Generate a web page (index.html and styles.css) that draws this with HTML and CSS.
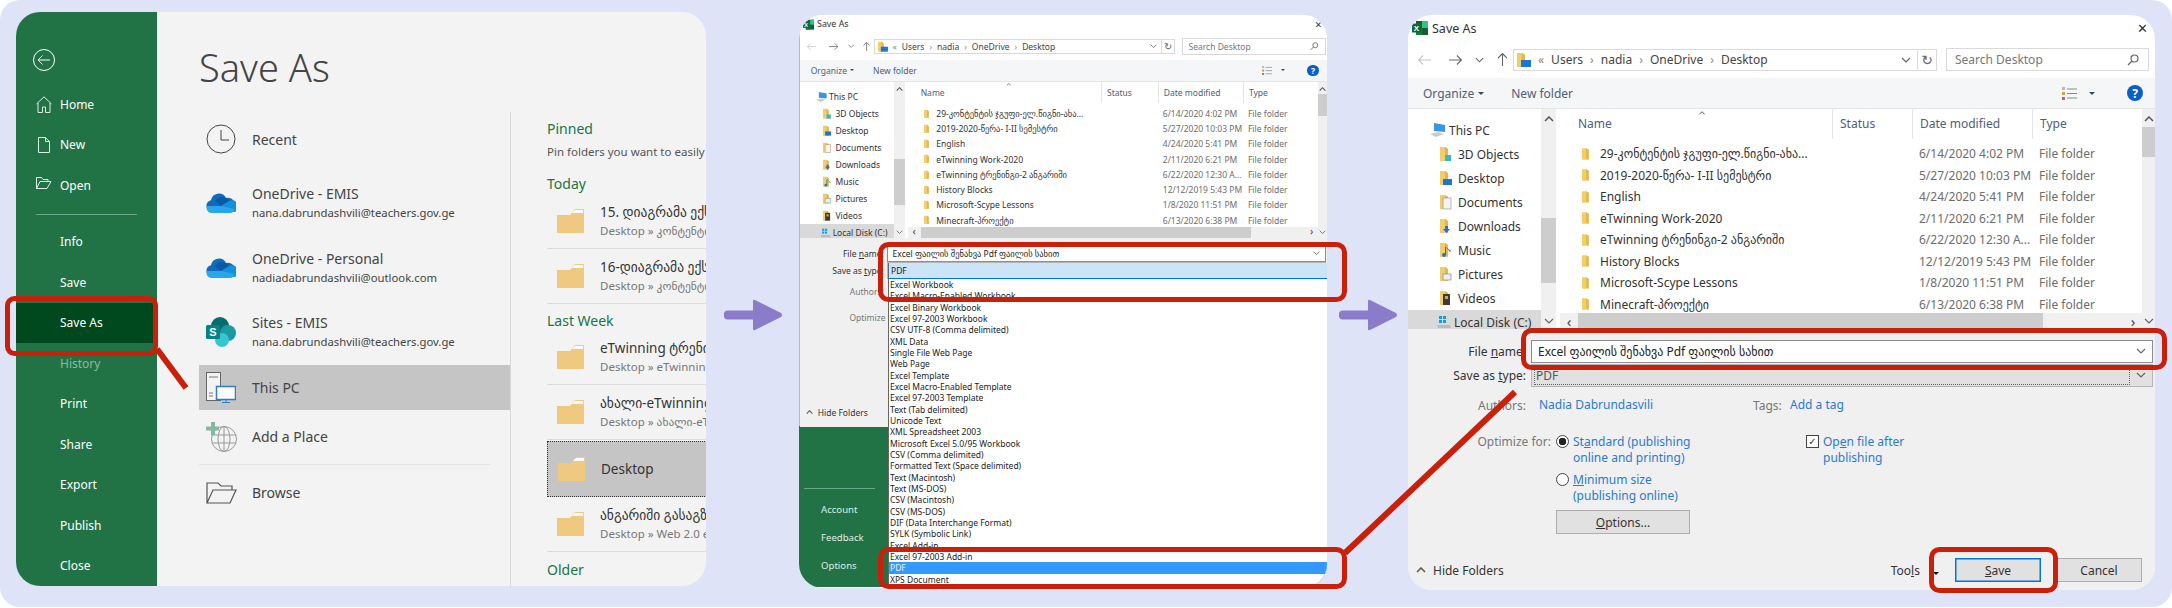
FILE: index.html
```html
<!DOCTYPE html>
<html>

<head>
    <title>Save As - Excel to PDF steps</title>
    <link rel="stylesheet" href="styles.css">
</head>

<body>
    <!-- shared icons -->
    <svg class="defs" width="0" height="0">
        <symbol id="i-folder" viewBox="0 0 27 24">
            <path d="M0 6h13l5-6h9v24H0z" fill="#efc97f"/>
            <path d="M18 1h8v3h-11z" fill="#fff"/>
        </symbol>
        <symbol id="i-small-folder" viewBox="0 0 12 16">
            <path d="M0 1h5l3 2v12H0z" fill="#f3cd6c"/>
            <path d="M5 1l3 2v12l-3-2z" fill="#e3b54a"/>
        </symbol>
        <symbol id="i-cloud" viewBox="0 0 30 20">
            <path d="M6 19a6 6 0 0 1-1-11.800A8 8 0 0 1 20 5a6 6 0 0 1 4 14z" fill="#0f6cbd"/>
            <path d="M9 8a8 8 0 0 1 11-3l4 3-9 5z" fill="#0a58a8"/>
            <path d="M15 13l8-5a6 6 0 0 1 6 11H8z" fill="#1490df"/>
            <path d="M5 20a5 5 0 0 1-4-7l14 0 13 3a4 4 0 0 1-4 4z" fill="#28a8ea"/>
        </symbol>
        <symbol id="i-excel" viewBox="0 0 16 16">
            <rect x="4" y="1" width="12" height="14" fill="#185c37"/>
            <rect x="10" y="1" width="6" height="7" fill="#33c481"/>
            <rect x="4" y="8" width="6" height="7" fill="#107c41"/>
            <rect x="0" y="3.500" width="9" height="9" fill="#0b6a3b"/>
            <text x="4.500" y="11" class="svg-x">X</text>
        </symbol>
        <symbol id="i-chev-down" viewBox="0 0 10 6">
            <path d="M1 1l4 4 4-4" fill="none" stroke="#666" stroke-width="1.200"/>
        </symbol>
        <symbol id="i-chev-up" viewBox="0 0 10 6">
            <path d="M1 5l4-4 4 4" fill="none" stroke="#555" stroke-width="1.500"/>
        </symbol>
        <symbol id="i-arrow" viewBox="0 0 13 10">
            <path d="M0 5h12.500M8 .5L12.500 5 8 9.500" fill="none" stroke="currentColor" stroke-width="1.100"/>
        </symbol>
    </svg>

    <main class="sheet">

        <!-- step 1: backstage -->
        <section class="panel backstage">
            <nav class="side">
                <div class="side-back">
                    <svg width="22" height="22" viewBox="0 0 22 22" fill="none" stroke="#fff" stroke-width="1">
                        <circle cx="11" cy="11" r="10.500"/>
                        <path d="M5 11h12M9.500 6.500L5 11l4.500 4.500"/>
                    </svg>
                </div>
                <a class="side-item">
                    <svg class="side-icon" width="16" height="17" viewBox="0 0 16 17" fill="none" stroke="#dfeee5" stroke-width="1">
                        <path d="M.5 8L8 .8 15.500 8M2 7v9.500h4.500V11h3v5.500H14V7"/>
                    </svg>Home
                </a>
                <a class="side-item">
                    <svg class="side-icon" width="16" height="16" viewBox="0 0 16 16" fill="none" stroke="#dfeee5" stroke-width="1">
                        <path d="M2.500.5h7l4 4v11h-11zM9.500.5v4h4"/>
                    </svg>New
                </a>
                <a class="side-item">
                    <svg class="side-icon" width="16" height="12" viewBox="0 0 16 12" fill="none" stroke="#dfeee5" stroke-width="1">
                        <path d="M.5 11.500V.5h5l1.500 2h5v2M.5 11.500h10.500l4-7H4z"/>
                    </svg>Open
                </a>
                <div class="side-rule"></div>
                <a class="side-item">Info</a>
                <a class="side-item">Save</a>
                <a class="side-item current">Save As</a>
                <a class="side-item muted">History</a>
                <a class="side-item">Print</a>
                <a class="side-item">Share</a>
                <a class="side-item">Export</a>
                <a class="side-item">Publish</a>
                <a class="side-item">Close</a>
            </nav>

            <div class="stage">
                <h1 class="stage-title">Save As</h1>
                <div class="stage-cols">
                    <div class="places">
                        <div class="place place-recent">
                            <span class="place-icon">
                                <svg width="30" height="30" viewBox="0 0 30 30" fill="none" stroke="#444" stroke-width="1">
                                    <circle cx="15" cy="15" r="14"/>
                                    <path d="M15 6v10h8"/>
                                </svg>
                            </span>
                            <div class="place-title">Recent</div>
                        </div>
                        <div class="place place-two">
                            <span class="place-icon">
                                <svg width="30" height="20"><use href="#i-cloud"/></svg>
                            </span>
                            <div>
                                <div class="place-title">OneDrive - EMIS</div>
                                <div class="place-sub">nana.dabrundashvili@teachers.gov.ge</div>
                            </div>
                        </div>
                        <div class="place place-two">
                            <span class="place-icon">
                                <svg width="30" height="20"><use href="#i-cloud"/></svg>
                            </span>
                            <div>
                                <div class="place-title">OneDrive - Personal</div>
                                <div class="place-sub">nadiadabrundashvili@outlook.com</div>
                            </div>
                        </div>
                        <div class="place place-two">
                            <span class="place-icon">
                                <svg width="30" height="30" viewBox="0 0 30 30">
                                    <circle cx="14" cy="9" r="9" fill="#036c70"/>
                                    <circle cx="22" cy="16" r="8" fill="#1a9ba1"/>
                                    <circle cx="16" cy="23" r="7" fill="#37c6d0"/>
                                    <rect x="0" y="8" width="14" height="14" rx="1.500" fill="#038387"/>
                                    <text x="7" y="19" class="svg-s">S</text>
                                </svg>
                            </span>
                            <div>
                                <div class="place-title">Sites - EMIS</div>
                                <div class="place-sub">nana.dabrundashvili@teachers.gov.ge</div>
                            </div>
                        </div>
                        <div class="place place-pc">
                            <span class="place-icon">
                                <svg width="30" height="31" viewBox="0 0 30 31">
                                    <rect x=".5" y=".5" width="14" height="28" fill="#f4f4f4" stroke="#666"/>
                                    <path d="M3 5h9M3 21h4M3 24h4" stroke="#777"/>
                                    <rect x="10.500" y="14.500" width="19" height="13" fill="#fff" stroke="#2b7cd3" stroke-width="1.500"/>
                                    <path d="M20 28v2M16 30.500h8" stroke="#2b7cd3"/>
                                </svg>
                            </span>
                            <div class="place-title">This PC</div>
                        </div>
                        <div class="place place-add">
                            <span class="place-icon">
                                <svg width="31" height="30" viewBox="0 0 31 30" fill="none">
                                    <g stroke="#999">
                                        <circle cx="18" cy="17" r="12.500"/>
                                        <ellipse cx="18" cy="17" rx="6" ry="12.500"/>
                                        <path d="M6 13h24M6 21h24M18 4v26"/>
                                    </g>
                                    <path d="M7 0v13M0 6.500h13" stroke="#86b8a0" stroke-width="4"/>
                                </svg>
                            </span>
                            <div class="place-title">Add a Place</div>
                        </div>
                        <div class="place place-browse">
                            <span class="place-icon">
                                <svg width="31" height="22" viewBox="0 0 31 22" fill="none" stroke="#555" stroke-width="1.200">
                                    <path d="M1 21V1h11l3 3h11v4M1 21h23l6-13H7z"/>
                                </svg>
                            </span>
                            <div class="place-title">Browse</div>
                        </div>
                    </div>

                    <div class="recent">
                        <h2 class="recent-head">Pinned</h2>
                        <p class="recent-note">Pin folders you want to easily find later</p>
                        <h2 class="recent-head today">Today</h2>
                        <div class="folder-row">
                            <svg width="27" height="24"><use href="#i-folder"/></svg>
                            <div>
                                <div class="folder-title">15. დიაგრამა ექსელში</div>
                                <div class="folder-sub">Desktop » კონტენტი</div>
                            </div>
                        </div>
                        <div class="folder-row">
                            <svg width="27" height="24"><use href="#i-folder"/></svg>
                            <div>
                                <div class="folder-title">16-დიაგრამა ექსელში</div>
                                <div class="folder-sub">Desktop » კონტენტი</div>
                            </div>
                        </div>
                        <h2 class="recent-head">Last Week</h2>
                        <div class="folder-row">
                            <svg width="27" height="24"><use href="#i-folder"/></svg>
                            <div>
                                <div class="folder-title">eTwinning ტრენინგი</div>
                                <div class="folder-sub">Desktop » eTwinning</div>
                            </div>
                        </div>
                        <div class="folder-row">
                            <svg width="27" height="24"><use href="#i-folder"/></svg>
                            <div>
                                <div class="folder-title">ახალი-eTwinning</div>
                                <div class="folder-sub">Desktop » ახალი-eTwinning</div>
                            </div>
                        </div>
                        <div class="folder-row picked">
                            <svg width="27" height="24"><use href="#i-folder"/></svg>
                            <div class="folder-title">Desktop</div>
                        </div>
                        <div class="folder-row">
                            <svg width="27" height="24"><use href="#i-folder"/></svg>
                            <div>
                                <div class="folder-title">ანგარიში გასაგზავნი</div>
                                <div class="folder-sub">Desktop » Web 2.0 eTwinning</div>
                            </div>
                        </div>
                        <h2 class="recent-head older">Older</h2>
                    </div>
                </div>
            </div>
        </section>

        <div class="arrow-cell">
            <svg width="58" height="32" viewBox="0 0 58 32"><path d="M4 16h26" stroke="#8a7cc9" stroke-width="9" stroke-linecap="round"/><path d="M29 2q0-2 2-1l26 13q2 2 0 4L31 31q-2 1-2-1z" fill="#8a7cc9"/></svg>
        </div>

        <!-- step 2: dialog with the type list open -->
        <section class="panel panel-mid">
            <div class="dialog dialog-small">
                <div class="dlg-title">
                    <svg width="16" height="16"><use href="#i-excel"/></svg>
                    <span>Save As</span>
                    <span class="dlg-close">✕</span>
                </div>
                <div class="dlg-nav">
                    <svg class="nav-back" width="13" height="10"><use href="#i-arrow" transform="rotate(180 6.500 5)"/></svg>
                    <svg class="nav-fwd" width="13" height="10"><use href="#i-arrow"/></svg>
                    <svg class="nav-chev" width="9" height="6"><use href="#i-chev-down"/></svg>
                    <svg class="nav-up" width="11" height="13"><use href="#i-arrow" width="13" height="10" transform="rotate(-90 6.500 6.500) translate(0 1.500)"/></svg>
                    <div class="addr">
                        <svg width="14" height="16" viewBox="0 0 14 16"><use href="#i-small-folder" width="12" height="16"/><rect x="4" y="8" width="10" height="7" fill="#1b78d0"/></svg>
                        <span class="crumb-sep">«</span><span>Users</span><span class="crumb-sep">›</span><span>nadia</span><span class="crumb-sep">›</span><span>OneDrive</span><span class="crumb-sep">›</span><span>Desktop</span>
                        <svg class="addr-chev" width="10" height="6"><use href="#i-chev-down"/></svg>
                        <span class="addr-refresh">↻</span>
                    </div>
                    <div class="search">
                        <span>Search Desktop</span>
                        <svg width="12" height="12" viewBox="0 0 12 12" fill="none" stroke="#666" stroke-width="1.200"><circle cx="7.500" cy="4.500" r="3.500"/><path d="M5 7l-4 4"/></svg>
                    </div>
                </div>
                <div class="dlg-tools">
                    <span class="tool">Organize <i class="caret"></i></span>
                    <span class="tool">New folder</span>
                    <span class="tool-view">
                        <svg width="15" height="13" viewBox="0 0 15 13"><path d="M5 2h10M5 6.500h10M5 11h10" stroke="#888"/><rect width="3" height="3" fill="#b8b8b8"/><rect y="5" width="3" height="3" fill="#d9a441"/><rect y="10" width="3" height="3" fill="#b86a5a"/></svg>
                        <i class="caret"></i>
                    </span>
                    <span class="help">?</span>
                </div>
                <div class="dlg-body">
                    <div class="tree">
                        <div class="tree-row root"><svg width="16" height="14" viewBox="0 0 16 14"><path d="M4 0l11 2v7L4 8z" fill="#3a96dd"/><path d="M0 11l8-2 6 2-8 3z" fill="#ccc"/></svg>This PC</div>
                        <div class="tree-row"><svg width="12" height="16" viewBox="0 0 12 16"><use href="#i-small-folder"/><rect x="5" y="9" width="6" height="6" fill="#37b5cf"/></svg>3D Objects</div>
                        <div class="tree-row"><svg width="12" height="16" viewBox="0 0 12 16"><use href="#i-small-folder"/><rect x="3" y="9" width="9" height="6" fill="#1b78d0"/></svg>Desktop</div>
                        <div class="tree-row"><svg width="12" height="16" viewBox="0 0 12 16"><use href="#i-small-folder"/><rect x="3" y="4" width="8" height="11" fill="#f4f4f4" stroke="#8a8a8a" stroke-width=".6"/></svg>Documents</div>
                        <div class="tree-row"><svg width="12" height="16" viewBox="0 0 12 16"><use href="#i-small-folder"/><path d="M5 8h3v3h2l-3.500 4L3 11h2z" fill="#2a6fc9"/></svg>Downloads</div>
                        <div class="tree-row"><svg width="12" height="16" viewBox="0 0 12 16"><use href="#i-small-folder"/><path d="M6 5v8a2 2 0 1 1-2-2h1V5h1l5 4-1 1z" fill="#1b78d0"/></svg>Music</div>
                        <div class="tree-row"><svg width="12" height="16" viewBox="0 0 12 16"><use href="#i-small-folder"/><rect x="3" y="8" width="8" height="6" fill="#eee" stroke="#7a94ad" stroke-width=".7"/></svg>Pictures</div>
                        <div class="tree-row"><svg width="12" height="16" viewBox="0 0 12 16"><use href="#i-small-folder"/><rect x="3" y="4" width="7" height="11" fill="#3b3b3b"/><rect x="5" y="6" width="3" height="3" fill="#d9a441"/></svg>Videos</div>
                        <div class="tree-row disk"><svg width="16" height="14" viewBox="0 0 16 14"><path d="M1 10h13l1 3H2z" fill="#bbb"/><rect x="3" y="1" width="3" height="3" fill="#00a4ef"/><rect x="7" y="1" width="3" height="3" fill="#00a4ef"/><rect x="3" y="5" width="3" height="3" fill="#00a4ef"/><rect x="7" y="5" width="3" height="3" fill="#00a4ef"/></svg>Local Disk (C:)</div>
                    </div>
                    <div class="vbar tree-bar">
                        <svg class="vbar-btn" width="10" height="6"><use href="#i-chev-up"/></svg>
                        <div class="vbar-thumb tree-thumb"></div>
                        <svg class="vbar-btn low" width="10" height="6"><use href="#i-chev-down"/></svg>
                    </div>
                    <div class="files">
                        <div class="files-main">
                            <div class="file-head">
                                <span class="col-name">Name<svg class="sort-mark" width="8" height="4" viewBox="0 0 10 6"><use href="#i-chev-up"/></svg></span><span>Status</span><span>Date modified</span><span>Type</span>
                            </div>
                            <div class="file-rows">
                                <div class="file-row"><span class="col-name"><svg width="10" height="14"><use href="#i-small-folder"/></svg><b>29-კონტენტის ჯგუფი-ელ.წიგნი-ახა...</b></span><span></span><span>6/14/2020 4:02 PM</span><span>File folder</span></div>
                                <div class="file-row"><span class="col-name"><svg width="10" height="14"><use href="#i-small-folder"/></svg><b>2019-2020-წერა- I-II სემესტრი</b></span><span></span><span>5/27/2020 10:03 PM</span><span>File folder</span></div>
                                <div class="file-row"><span class="col-name"><svg width="10" height="14"><use href="#i-small-folder"/></svg><b>English</b></span><span></span><span>4/24/2020 5:41 PM</span><span>File folder</span></div>
                                <div class="file-row"><span class="col-name"><svg width="10" height="14"><use href="#i-small-folder"/></svg><b>eTwinning Work-2020</b></span><span></span><span>2/11/2020 6:21 PM</span><span>File folder</span></div>
                                <div class="file-row"><span class="col-name"><svg width="10" height="14"><use href="#i-small-folder"/></svg><b>eTwinning ტრენინგი-2 ანგარიში</b></span><span></span><span>6/22/2020 12:30 A...</span><span>File folder</span></div>
                                <div class="file-row"><span class="col-name"><svg width="10" height="14"><use href="#i-small-folder"/></svg><b>History Blocks</b></span><span></span><span>12/12/2019 5:43 PM</span><span>File folder</span></div>
                                <div class="file-row"><span class="col-name"><svg width="10" height="14"><use href="#i-small-folder"/></svg><b>Microsoft-Scype Lessons</b></span><span></span><span>1/8/2020 11:51 PM</span><span>File folder</span></div>
                                <div class="file-row"><span class="col-name"><svg width="10" height="14"><use href="#i-small-folder"/></svg><b>Minecraft-პროექტი</b></span><span></span><span>6/13/2020 6:38 PM</span><span>File folder</span></div>
                            </div>
                            <div class="hbar"><span class="hbar-btn">‹</span><div class="hbar-thumb"></div><span class="hbar-btn">›</span></div>
                        </div>
                        <div class="vbar list-bar">
                            <svg class="vbar-btn" width="10" height="6"><use href="#i-chev-up"/></svg>
                            <div class="vbar-thumb list-thumb"></div>
                            <svg class="vbar-btn low" width="10" height="6"><use href="#i-chev-down"/></svg>
                        </div>
                    </div>
                </div>
                <div class="form">
                    <div class="form-line">
                        <label class="form-label dark">File <u>n</u>ame:</label>
                        <div class="field">Excel ფაილის შენახვა Pdf ფაილის სახით<svg width="10" height="6"><use href="#i-chev-down"/></svg></div>
                    </div>
                    <div class="form-line">
                        <label class="form-label dark">Save as <u>t</u>ype:</label>
                        <div class="field field-type"><span class="type-value">PDF</span><svg width="10" height="6"><use href="#i-chev-down"/></svg></div>
                    </div>
                    <div class="form-line meta">
                        <label class="form-label">Authors:</label>
                        <a class="link authors">Nadia Dabrundasvili</a>
                        <label class="tags-label">Tags:</label>
                        <a class="link">Add a tag</a>
                    </div>
                    <div class="opts">
                        <label class="opts-label">Optimize for:</label>
                        <div class="opts-radios">
                            <div class="radio-line"><i class="radio on"></i><a class="link">St<u>a</u>ndard (publishing<br>online and printing)</a></div>
                            <div class="radio-line"><i class="radio"></i><a class="link"><u>M</u>inimum size<br>(publishing online)</a></div>
                            <button class="btn btn-opts"><u>O</u>ptions...</button>
                        </div>
                        <div class="radio-line"><i class="check">✓</i><a class="link">Op<u>e</u>n file after<br>publishing</a></div>
                    </div>
                    <div class="form-foot">
                        <span class="hide-folders"><svg width="10" height="6"><use href="#i-chev-up"/></svg>Hide Folders</span>
                        <span class="tools">Too<u>l</u>s <i class="caret dark"></i></span>
                        <button class="btn btn-save"><u>S</u>ave</button>
                        <button class="btn btn-cancel">Cancel</button>
                    </div>
                </div>
            </div>
            <div class="mid-foot">
                <div class="mid-rule"></div>
                <a class="mid-item">Account</a>
                <a class="mid-item">Feedback</a>
                <a class="mid-item">Options</a>
            </div>
            <!-- open combo list -->
            <div class="typelist">
                <div class="type-combo">PDF</div>
                <ul class="type-items">
                    <li>Excel Workbook</li>
                    <li>Excel Macro-Enabled Workbook</li>
                    <li>Excel Binary Workbook</li>
                    <li>Excel 97-2003 Workbook</li>
                    <li>CSV UTF-8 (Comma delimited)</li>
                    <li>XML Data</li>
                    <li>Single File Web Page</li>
                    <li>Web Page</li>
                    <li>Excel Template</li>
                    <li>Excel Macro-Enabled Template</li>
                    <li>Excel 97-2003 Template</li>
                    <li>Text (Tab delimited)</li>
                    <li>Unicode Text</li>
                    <li>XML Spreadsheet 2003</li>
                    <li>Microsoft Excel 5.0/95 Workbook</li>
                    <li>CSV (Comma delimited)</li>
                    <li>Formatted Text (Space delimited)</li>
                    <li>Text (Macintosh)</li>
                    <li>Text (MS-DOS)</li>
                    <li>CSV (Macintosh)</li>
                    <li>CSV (MS-DOS)</li>
                    <li>DIF (Data Interchange Format)</li>
                    <li>SYLK (Symbolic Link)</li>
                    <li>Excel Add-in</li>
                    <li>Excel 97-2003 Add-in</li>
                    <li class="active">PDF</li>
                    <li>XPS Document</li>
                </ul>
            </div>
        </section>

        <div class="arrow-cell">
            <svg width="58" height="32" viewBox="0 0 58 32"><path d="M4 16h26" stroke="#8a7cc9" stroke-width="9" stroke-linecap="round"/><path d="M29 2q0-2 2-1l26 13q2 2 0 4L31 31q-2 1-2-1z" fill="#8a7cc9"/></svg>
        </div>

        <!-- step 3: dialog ready to save -->
        <section class="panel panel-last">
            <div class="dialog">
                <div class="dlg-title">
                    <svg width="16" height="16"><use href="#i-excel"/></svg>
                    <span>Save As</span>
                    <span class="dlg-close">✕</span>
                </div>
                <div class="dlg-nav">
                    <svg class="nav-back" width="13" height="10"><use href="#i-arrow" transform="rotate(180 6.500 5)"/></svg>
                    <svg class="nav-fwd" width="13" height="10"><use href="#i-arrow"/></svg>
                    <svg class="nav-chev" width="9" height="6"><use href="#i-chev-down"/></svg>
                    <svg class="nav-up" width="11" height="13"><use href="#i-arrow" width="13" height="10" transform="rotate(-90 6.500 6.500) translate(0 1.500)"/></svg>
                    <div class="addr">
                        <svg width="14" height="16" viewBox="0 0 14 16"><use href="#i-small-folder" width="12" height="16"/><rect x="4" y="8" width="10" height="7" fill="#1b78d0"/></svg>
                        <span class="crumb-sep">«</span><span>Users</span><span class="crumb-sep">›</span><span>nadia</span><span class="crumb-sep">›</span><span>OneDrive</span><span class="crumb-sep">›</span><span>Desktop</span>
                        <svg class="addr-chev" width="10" height="6"><use href="#i-chev-down"/></svg>
                        <span class="addr-refresh">↻</span>
                    </div>
                    <div class="search">
                        <span>Search Desktop</span>
                        <svg width="12" height="12" viewBox="0 0 12 12" fill="none" stroke="#666" stroke-width="1.200"><circle cx="7.500" cy="4.500" r="3.500"/><path d="M5 7l-4 4"/></svg>
                    </div>
                </div>
                <div class="dlg-tools">
                    <span class="tool">Organize <i class="caret"></i></span>
                    <span class="tool">New folder</span>
                    <span class="tool-view">
                        <svg width="15" height="13" viewBox="0 0 15 13"><path d="M5 2h10M5 6.500h10M5 11h10" stroke="#888"/><rect width="3" height="3" fill="#b8b8b8"/><rect y="5" width="3" height="3" fill="#d9a441"/><rect y="10" width="3" height="3" fill="#b86a5a"/></svg>
                        <i class="caret"></i>
                    </span>
                    <span class="help">?</span>
                </div>
                <div class="dlg-body">
                    <div class="tree">
                        <div class="tree-row root"><svg width="16" height="14" viewBox="0 0 16 14"><path d="M4 0l11 2v7L4 8z" fill="#3a96dd"/><path d="M0 11l8-2 6 2-8 3z" fill="#ccc"/></svg>This PC</div>
                        <div class="tree-row"><svg width="12" height="16" viewBox="0 0 12 16"><use href="#i-small-folder"/><rect x="5" y="9" width="6" height="6" fill="#37b5cf"/></svg>3D Objects</div>
                        <div class="tree-row"><svg width="12" height="16" viewBox="0 0 12 16"><use href="#i-small-folder"/><rect x="3" y="9" width="9" height="6" fill="#1b78d0"/></svg>Desktop</div>
                        <div class="tree-row"><svg width="12" height="16" viewBox="0 0 12 16"><use href="#i-small-folder"/><rect x="3" y="4" width="8" height="11" fill="#f4f4f4" stroke="#8a8a8a" stroke-width=".6"/></svg>Documents</div>
                        <div class="tree-row"><svg width="12" height="16" viewBox="0 0 12 16"><use href="#i-small-folder"/><path d="M5 8h3v3h2l-3.500 4L3 11h2z" fill="#2a6fc9"/></svg>Downloads</div>
                        <div class="tree-row"><svg width="12" height="16" viewBox="0 0 12 16"><use href="#i-small-folder"/><path d="M6 5v8a2 2 0 1 1-2-2h1V5h1l5 4-1 1z" fill="#1b78d0"/></svg>Music</div>
                        <div class="tree-row"><svg width="12" height="16" viewBox="0 0 12 16"><use href="#i-small-folder"/><rect x="3" y="8" width="8" height="6" fill="#eee" stroke="#7a94ad" stroke-width=".7"/></svg>Pictures</div>
                        <div class="tree-row"><svg width="12" height="16" viewBox="0 0 12 16"><use href="#i-small-folder"/><rect x="3" y="4" width="7" height="11" fill="#3b3b3b"/><rect x="5" y="6" width="3" height="3" fill="#d9a441"/></svg>Videos</div>
                        <div class="tree-row disk"><svg width="16" height="14" viewBox="0 0 16 14"><path d="M1 10h13l1 3H2z" fill="#bbb"/><rect x="3" y="1" width="3" height="3" fill="#00a4ef"/><rect x="7" y="1" width="3" height="3" fill="#00a4ef"/><rect x="3" y="5" width="3" height="3" fill="#00a4ef"/><rect x="7" y="5" width="3" height="3" fill="#00a4ef"/></svg>Local Disk (C:)</div>
                    </div>
                    <div class="vbar tree-bar">
                        <svg class="vbar-btn" width="10" height="6"><use href="#i-chev-up"/></svg>
                        <div class="vbar-thumb tree-thumb"></div>
                        <svg class="vbar-btn low" width="10" height="6"><use href="#i-chev-down"/></svg>
                    </div>
                    <div class="files">
                        <div class="files-main">
                            <div class="file-head">
                                <span class="col-name">Name<svg class="sort-mark" width="8" height="4" viewBox="0 0 10 6"><use href="#i-chev-up"/></svg></span><span>Status</span><span>Date modified</span><span>Type</span>
                            </div>
                            <div class="file-rows">
                                <div class="file-row"><span class="col-name"><svg width="10" height="14"><use href="#i-small-folder"/></svg><b>29-კონტენტის ჯგუფი-ელ.წიგნი-ახა...</b></span><span></span><span>6/14/2020 4:02 PM</span><span>File folder</span></div>
                                <div class="file-row"><span class="col-name"><svg width="10" height="14"><use href="#i-small-folder"/></svg><b>2019-2020-წერა- I-II სემესტრი</b></span><span></span><span>5/27/2020 10:03 PM</span><span>File folder</span></div>
                                <div class="file-row"><span class="col-name"><svg width="10" height="14"><use href="#i-small-folder"/></svg><b>English</b></span><span></span><span>4/24/2020 5:41 PM</span><span>File folder</span></div>
                                <div class="file-row"><span class="col-name"><svg width="10" height="14"><use href="#i-small-folder"/></svg><b>eTwinning Work-2020</b></span><span></span><span>2/11/2020 6:21 PM</span><span>File folder</span></div>
                                <div class="file-row"><span class="col-name"><svg width="10" height="14"><use href="#i-small-folder"/></svg><b>eTwinning ტრენინგი-2 ანგარიში</b></span><span></span><span>6/22/2020 12:30 A...</span><span>File folder</span></div>
                                <div class="file-row"><span class="col-name"><svg width="10" height="14"><use href="#i-small-folder"/></svg><b>History Blocks</b></span><span></span><span>12/12/2019 5:43 PM</span><span>File folder</span></div>
                                <div class="file-row"><span class="col-name"><svg width="10" height="14"><use href="#i-small-folder"/></svg><b>Microsoft-Scype Lessons</b></span><span></span><span>1/8/2020 11:51 PM</span><span>File folder</span></div>
                                <div class="file-row"><span class="col-name"><svg width="10" height="14"><use href="#i-small-folder"/></svg><b>Minecraft-პროექტი</b></span><span></span><span>6/13/2020 6:38 PM</span><span>File folder</span></div>
                            </div>
                            <div class="hbar"><span class="hbar-btn">‹</span><div class="hbar-thumb"></div><span class="hbar-btn">›</span></div>
                        </div>
                        <div class="vbar list-bar">
                            <svg class="vbar-btn" width="10" height="6"><use href="#i-chev-up"/></svg>
                            <div class="vbar-thumb list-thumb"></div>
                            <svg class="vbar-btn low" width="10" height="6"><use href="#i-chev-down"/></svg>
                        </div>
                    </div>
                </div>
                <div class="form">
                    <div class="form-line">
                        <label class="form-label dark">File <u>n</u>ame:</label>
                        <div class="field">Excel ფაილის შენახვა Pdf ფაილის სახით<svg width="10" height="6"><use href="#i-chev-down"/></svg></div>
                    </div>
                    <div class="form-line">
                        <label class="form-label dark">Save as <u>t</u>ype:</label>
                        <div class="field field-type"><span class="type-value">PDF</span><svg width="10" height="6"><use href="#i-chev-down"/></svg></div>
                    </div>
                    <div class="form-line meta">
                        <label class="form-label">Authors:</label>
                        <a class="link authors">Nadia Dabrundasvili</a>
                        <label class="tags-label">Tags:</label>
                        <a class="link">Add a tag</a>
                    </div>
                    <div class="opts">
                        <label class="opts-label">Optimize for:</label>
                        <div class="opts-radios">
                            <div class="radio-line"><i class="radio on"></i><a class="link">St<u>a</u>ndard (publishing<br>online and printing)</a></div>
                            <div class="radio-line"><i class="radio"></i><a class="link"><u>M</u>inimum size<br>(publishing online)</a></div>
                            <button class="btn btn-opts"><u>O</u>ptions...</button>
                        </div>
                        <div class="radio-line"><i class="check">✓</i><a class="link">Op<u>e</u>n file after<br>publishing</a></div>
                    </div>
                    <div class="form-foot">
                        <span class="hide-folders"><svg width="10" height="6"><use href="#i-chev-up"/></svg>Hide Folders</span>
                        <span class="tools">Too<u>l</u>s <i class="caret dark"></i></span>
                        <button class="btn btn-save"><u>S</u>ave</button>
                        <button class="btn btn-cancel">Cancel</button>
                    </div>
                </div>
            </div>
        </section>

        <!-- red call-outs drawn over the screenshots -->
        <svg class="marks" width="2172" height="607" viewBox="0 0 2172 607" fill="none" stroke="#c8200a" stroke-width="5">
            <rect x="7.500" y="298.500" width="148" height="55" rx="7"/>
            <path d="M157 349l29 39" stroke-width="6"/>
            <rect x="880.500" y="244.500" width="464" height="55" rx="8"/>
            <rect x="880.500" y="549.500" width="464" height="37" rx="8"/>
            <rect x="1523.500" y="330.500" width="641" height="37" rx="8"/>
            <path d="M1345 553l170-161" stroke-width="6"/>
            <rect x="1931.500" y="549.500" width="124" height="41" rx="8"/>
        </svg>
    </main>
</body>

</html>
```

FILE: styles.css
```css
html,
body {
    margin: 0;
    height: 100%;
    background: #fff;
    font-family: "Noto Sans", "DejaVu Sans", sans-serif;
}

.defs {
    position: absolute;
}

.svg-x {
    font: bold 8px "Liberation Sans", sans-serif;
    fill: #fff;
    text-anchor: middle;
}

.svg-s {
    font: bold 11px "Liberation Sans", sans-serif;
    fill: #fff;
    text-anchor: middle;
}

.sheet {
    position: relative;
    display: flex;
    align-items: flex-start;
    box-sizing: border-box;
    width: 2172px;
    height: 607px;
    padding: 12px 0 0 16px;
    background: #dfe3f7;
    border-radius: 20px;
    overflow: hidden;
}

.marks {
    position: absolute;
    left: 0;
    top: 0;
}

.panel {
    border-radius: 24px;
    overflow: hidden;
    flex: none;
}

.arrow-cell {
    flex: none;
    display: flex;
    justify-content: center;
    padding-top: 287px;
}

.arrow-cell:nth-of-type(1) {
    width: 93px;
}

/* step 1 */
.backstage {
    display: flex;
    width: 690px;
    height: 574px;
    background: #f3f3f3;
    color: #444;
}

.side {
    flex: none;
    width: 141px;
    background: #217346;
    color: #fff;
    font-size: 12px;
}

.side-back {
    box-sizing: border-box;
    height: 72px;
    padding: 37px 0 0 17px;
}

.side-item {
    display: flex;
    align-items: center;
    height: 40.500px;
    padding-left: 44px;
    position: relative;
}

.side-icon {
    position: absolute;
    left: 20px;
    top: 12px;
}

.side-item.current {
    background: #00491f;
}

.side-item.muted {
    color: #8fb8a0;
}

.side-rule {
    height: 1px;
    margin: 8px 20px 7px;
    background: #6ea588;
}

.stage {
    flex: 1;
    min-width: 0;
    display: flex;
    flex-direction: column;
}

.stage-title {
    box-sizing: border-box;
    height: 100px;
    margin: 0;
    padding: 27px 0 0 42px;
    font-size: 38px;
    line-height: 56px;
    font-weight: 300;
    color: #444;
}

.stage-cols {
    flex: 1;
    display: flex;
    min-height: 0;
}

.places {
    box-sizing: border-box;
    flex: none;
    width: 354px;
    padding-left: 42px;
    border-right: 1px solid #d9d9d9;
}

.place {
    box-sizing: border-box;
    display: flex;
    align-items: center;
    gap: 15px;
    padding-left: 6px;
}

.place-icon {
    flex: none;
    display: flex;
    justify-content: center;
    width: 32px;
}

.place-recent {
    height: 59px;
    padding-bottom: 5px;
}

.place-two {
    height: 64.600px;
}

.place-pc {
    height: 45px;
    background: #c5c5c5;
}

.place-add {
    height: 55px;
    margin-right: 20px;
    border-bottom: 1px solid #e3e3e3;
}

.place-browse {
    height: 56px;
}

.place-title {
    font-size: 14px;
    line-height: 19px;
    color: #444;
}

.place-sub {
    font-size: 11.300px;
    line-height: 19px;
    color: #444;
    white-space: nowrap;
}

.recent {
    flex: 1;
    min-width: 0;
    padding: 7px 0 0 36px;
    overflow: hidden;
    white-space: nowrap;
}

.recent-head {
    height: 20px;
    margin: 7px 0 -1px;
    font-size: 14px;
    line-height: 20px;
    font-weight: 400;
    color: #217346;
}

.recent-head:first-child {
    margin: 0 0 1px;
}

.recent-head.today {
    margin: 12px 0 0;
}

.recent-head.older {
    margin-top: 8px;
}

.recent-note {
    height: 20px;
    margin: 3px 0 0;
    font-size: 11.500px;
    line-height: 20px;
    color: #555;
}

.folder-row {
    box-sizing: border-box;
    display: flex;
    align-items: center;
    gap: 16px;
    height: 55px;
    width: 400px;
    padding-left: 10px;
    border-bottom: 1px solid #dcdcdc;
}

.folder-row.picked {
    height: 56px;
    margin-top: 1px;
    background: #c5c5c5;
    border: 1px dotted #333;
    border-right: 0;
}

.folder-title {
    font-size: 13.500px;
    line-height: 19px;
    color: #333;
}

.folder-sub {
    font-size: 11.500px;
    line-height: 17px;
    color: #777;
}

/* save dialog */
.panel-mid {
    position: relative;
    width: 528px;
    height: 573px;
    margin-top: 3px;
    background: #fff;
}

.panel-mid + .arrow-cell {
    width: 81px;
}

.panel-last {
    width: 747px;
    height: 575px;
    margin-top: 3px;
}

.dialog {
    display: flex;
    flex-direction: column;
    box-sizing: border-box;
    width: 747px;
    height: 575px;
    background: #fff;
    color: #333;
    font-size: 12px;
}

.dialog-small {
    zoom: 0.71;
    width: 744px;
    height: 580px;
    border-left: 1px solid #9fc9b1;
}

.dlg-title {
    display: flex;
    align-items: center;
    gap: 4px;
    box-sizing: border-box;
    height: 26px;
    padding: 0 7px 0 4px;
    font-size: 12.500px;
}

.dlg-close {
    margin-left: auto;
    font-size: 13px;
    color: #333;
}

.dlg-nav {
    display: flex;
    align-items: center;
    height: 37px;
    padding-left: 10px;
    color: #666;
}

.nav-back {
    color: #c4c4c4;
}

.nav-fwd {
    margin-left: 18px;
}

.nav-chev {
    margin-left: 13px;
}

.nav-up {
    margin-left: 12px;
}

.addr {
    display: flex;
    align-items: center;
    gap: 7px;
    box-sizing: border-box;
    width: 424px;
    height: 22px;
    margin-left: 6px;
    padding: 0 0 0 3px;
    border: 1px solid #d9d9d9;
    font-size: 12px;
    color: #444;
}

.crumb-sep {
    color: #888;
}

.addr-chev {
    margin-left: auto;
}

.addr-refresh {
    box-sizing: border-box;
    width: 19px;
    margin-left: -1px;
    border-left: 1px solid #d9d9d9;
    font-size: 14px;
    line-height: 20px;
    text-align: center;
    color: #666;
}

.search {
    display: flex;
    align-items: center;
    justify-content: space-between;
    box-sizing: border-box;
    width: 203px;
    height: 23px;
    margin-left: 9px;
    padding: 0 9px 0 8px;
    border: 1px solid #d9d9d9;
    color: #777;
}

.dlg-tools {
    display: flex;
    align-items: center;
    gap: 27px;
    box-sizing: border-box;
    height: 31px;
    padding: 0 12px 0 15px;
    background: #f5f6f7;
    border-bottom: 1px solid #e5e5e5;
    color: #4c607a;
}

.tool {
    display: flex;
    align-items: center;
    gap: 4px;
}

.tool-view {
    display: flex;
    align-items: center;
    gap: 12px;
    margin-left: auto;
    margin-right: 5px;
}

.caret {
    display: inline-block;
    width: 0;
    height: 0;
    border-left: 3px solid transparent;
    border-right: 3px solid transparent;
    border-top: 3px solid #33485f;
}

.caret.dark {
    border-top-color: #111;
    margin-left: 10px;
}

.help {
    display: flex;
    align-items: center;
    justify-content: center;
    width: 16px;
    height: 16px;
    border-radius: 50%;
    background: #0a5fc4;
    color: #fff;
    font-size: 12px;
    font-weight: 700;
}

.dlg-body {
    display: flex;
    height: 220px;
    flex: none;
}

.tree {
    flex: none;
    box-sizing: border-box;
    width: 133px;
    padding-top: 9px;
    overflow: hidden;
}

.tree-row {
    display: flex;
    align-items: center;
    gap: 6px;
    height: 24px;
    padding-left: 32px;
    white-space: nowrap;
}

.tree-row.root {
    gap: 3px;
    padding-left: 22px;
}

.tree-row.disk {
    gap: 2px;
    padding-left: 28px;
    background: #d9d9d9;
}

.vbar {
    flex: none;
    display: flex;
    flex-direction: column;
    align-items: center;
    background: #f0f0f0;
}

.tree-bar {
    width: 15px;
}

.list-bar {
    width: 13px;
}

.vbar-btn {
    flex: none;
    margin-top: 7px;
}

.vbar-btn.low {
    margin-top: auto;
    margin-bottom: 5px;
}

.vbar-thumb {
    width: 100%;
    background: #cdcdcd;
}

.tree-thumb {
    height: 65px;
    margin-top: 96px;
}

.list-thumb {
    height: 30px;
    margin-top: 5px;
}

.files {
    flex: 1;
    min-width: 0;
    display: flex;
    margin-left: 4px;
}

.files-main {
    flex: 1;
    min-width: 0;
    display: flex;
    flex-direction: column;
}

.file-head,
.file-row {
    display: grid;
    grid-template-columns: 272px 80px 120px 110px;
}

.file-head {
    flex: none;
    height: 27px;
    line-height: 30px;
    color: #4c607a;
}

.file-head span {
    box-sizing: border-box;
    padding-left: 7px;
    border-left: 1px solid #e5e5e5;
}

.file-head .col-name {
    position: relative;
    padding-left: 18px;
    border-left: 0;
}

.sort-mark {
    position: absolute;
    left: 138px;
    top: 2px;
}

.file-rows {
    flex: 1;
    min-height: 0;
    padding-top: 7px;
    overflow: hidden;
}

.file-row {
    height: 21.500px;
    line-height: 21.500px;
    color: #6d6d6d;
    white-space: nowrap;
}

.file-row span {
    padding-left: 7px;
    overflow: hidden;
}

.file-row .col-name {
    display: flex;
    align-items: center;
    gap: 8px;
    padding-left: 22px;
}

.file-row b {
    font-weight: 400;
    color: #333;
}

.hbar {
    flex: none;
    display: flex;
    align-items: center;
    height: 16px;
    background: #f0f0f0;
    color: #444;
}

.hbar-btn {
    flex: none;
    width: 18px;
    text-align: center;
    font-size: 15px;
    line-height: 14px;
}

.hbar-thumb {
    width: 465px;
    height: 100%;
    background: #cdcdcd;
}

.hbar-btn:last-child {
    margin-left: auto;
}

.form {
    flex: 1;
    display: flex;
    flex-direction: column;
    min-height: 0;
    padding-top: 10px;
    background: #f0f0f0;
}

.form-line {
    display: flex;
    align-items: center;
    height: 24px;
}

.form-label {
    flex: none;
    box-sizing: border-box;
    width: 123px;
    padding-right: 5px;
    text-align: right;
    color: #777;
}

.form-label.dark {
    color: #333;
}

.field {
    flex: 1;
    display: flex;
    align-items: center;
    justify-content: space-between;
    box-sizing: border-box;
    height: 23px;
    margin-right: 2px;
    padding: 0 6px;
    background: #fff;
    border: 1px solid #8e8e8e;
    color: #222;
}

.field-type {
    gap: 6px;
    padding-left: 2px;
    background: #e1e1e1;
    border: 1px solid #b5b5b5;
    color: #555;
}

.type-value {
    flex: 1;
    box-sizing: border-box;
    height: 19px;
    padding-left: 1px;
    border: 1px dotted #666;
    line-height: 17px;
}

.meta {
    margin-top: 6px;
}

.form-label + .authors {
    margin-left: 8px;
    width: 214px;
}

.tags-label {
    width: 37px;
    color: #777;
}

.link {
    color: #2a7ad4;
    line-height: 16px;
}

.opts {
    display: flex;
    margin-top: 17px;
}

.opts-label {
    flex: none;
    width: 143px;
    text-align: right;
    color: #777;
    line-height: 16px;
}

.opts-radios {
    flex: none;
    box-sizing: border-box;
    width: 255px;
    padding-left: 5px;
}

.radio-line {
    display: flex;
    gap: 4px;
    margin-bottom: 6px;
    align-items: flex-start;
}

.radio {
    flex: none;
    box-sizing: border-box;
    width: 13px;
    height: 13px;
    margin-top: 1px;
    background: #fff;
    border: 1px solid #444;
    border-radius: 50%;
}

.radio.on {
    background: radial-gradient(circle, #222 0 3.500px, #fff 4px);
}

.check {
    flex: none;
    box-sizing: border-box;
    width: 13px;
    height: 13px;
    margin-top: 1px;
    background: #fff;
    border: 1px solid #444;
    font-size: 10px;
    font-style: normal;
    line-height: 11px;
    text-align: center;
}

.btn {
    box-sizing: border-box;
    height: 24px;
    padding: 0;
    background: #e1e1e1;
    border: 1px solid #adadad;
    color: #333;
    font: inherit;
}

.btn-opts {
    display: block;
    width: 134px;
    margin-top: 2px;
}

.form-foot {
    display: flex;
    align-items: center;
    height: 24px;
    margin-top: auto;
    margin-bottom: 8px;
}

.hide-folders {
    display: flex;
    align-items: center;
    gap: 7px;
    padding-left: 8px;
    white-space: nowrap;
}

.tools {
    margin-left: auto;
    margin-right: 16px;
}

.btn-save {
    width: 86px;
    border: 1px solid #0078d7;
    box-shadow: inset 0 0 0 0.500px #0078d7;
}

.btn-cancel {
    width: 86px;
    margin: 0 13px 0 15px;
}

/* green strip behind the open list */
.mid-foot {
    box-sizing: border-box;
    height: 161px;
    padding-top: 62px;
    margin-top: -1px;
    background: #217346;
    color: #dfeee5;
    font-size: 9.600px;
}

.mid-rule {
    width: 71px;
    height: 1px;
    margin: 0 0 7px 5px;
    background: #6ea588;
}

.mid-item {
    display: block;
    height: 28px;
    padding-left: 22px;
    line-height: 28px;
}

.typelist {
    position: absolute;
    left: 89px;
    top: 248px;
    right: 0;
    bottom: 0;
    background: #fff;
    border-left: 1px solid #666;
    color: #222;
    font-size: 8.500px;
}

.type-combo {
    box-sizing: border-box;
    height: 16px;
    padding-left: 2px;
    background: #cce4f7;
    border: 1px solid #0078d7;
    border-width: 0 0 1px;
    line-height: 15px;
}

.type-items {
    margin: 0;
    padding: 0;
    list-style: none;
}

.type-items li {
    height: 11.330px;
    padding-left: 1px;
    line-height: 11.330px;
    white-space: nowrap;
}

.type-items .active {
    background: #3399ff;
    color: #e8f3ff;
}
```
